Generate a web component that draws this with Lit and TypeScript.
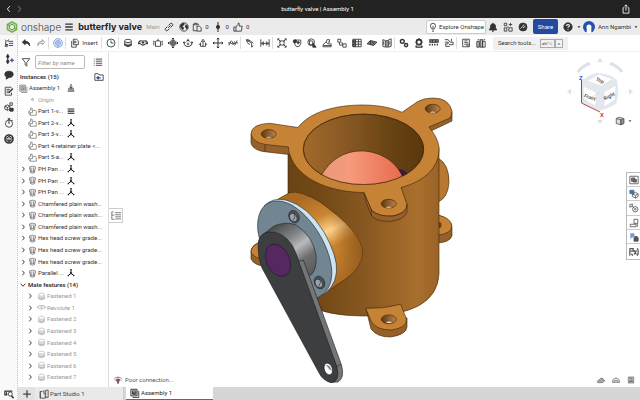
import { LitElement, html, css, svg, nothing } from "lit";
import { customElement, property } from "lit/decorators.js";

const icons: Record<string, unknown> = {
  chevL: svg`<path d="M7 2.5 4 6l3 3.5"/>`,
  chevR: svg`<path stroke-width="1.300" d="M5 2.5 8 6 5 9.5"/>`,
  down: svg`<path stroke-width="1.300" d="M2.500 4 6 8l3.500-4"/>`,
  share: svg`<path d="M4 4.5H2.5V11h7V4.5H8M6 8V1M4 3l2-2 2 2"/>`,
  menu: svg`<path stroke-width="1.6" d="M1.5 2.5h9M1.5 6h9M1.5 9.5h9"/>`,
  link: svg`<path stroke-width="1.2" d="M5 7 8 4M5.500 4l2-2q1.500-1 2.500 0t0 2.500l-2 2M6.500 8l-2 2q-1.500 1-2.500 0t0-2.500l2-2"/>`,
  globe: svg`<circle cx="6" cy="6" r="5"/><path fill="currentColor" stroke="none" d="M2 3 5 1l2 1-1 2-2 1 2 2-1 3-2-2-2-3zM8 3l2 1 1 3-2 2-1-2-1-1z"/>`,
  world: svg`<circle cx="6" cy="6" r="4.800" fill="currentColor"/><path stroke="#ececec" d="M3 8 6 5l1-2M6 7l3-2"/>`,
  doc: svg`<path d="M6 10.500H1.500v-8h1.500M6 2.500h1.500V4M3 1.500h3v2H3zM6 5h3l2 2v4H6z"/>`,
  commit: svg`<path stroke-width="1.300" d="M6 0v12"/><circle cx="6" cy="6" r="2" fill="currentColor"/>`,
  thumb: svg`<path d="M1 6h2.500v5H1zM3.500 6 6 3V1.500q1.500-1 1.500 1V5H11l-1 6H3.500"/>`,
  bulb: svg`<path d="M4.800 8.500Q3 6.500 3 4.500 3 1.500 6 1.500t3 3q0 2-1.800 4zM4.800 11h2.400M6 4.500v3.500"/>`,
  bell: svg`<path fill="currentColor" d="M1.500 9.500 3 7V4.500Q3.500 2 6 2t3 2.500V7l1.500 2.500zM5 10.500h2L6 11.500zM6 1v1"/>`,
  apps: svg`<path d="M1.500 1.500h3v3h-3zM1.500 7h3v4h-3zM7 7h4v4H7zM9 1v4M7 3h4M5 6h2"/>`,
  help: svg`<circle cx="6" cy="6" r="5" fill="currentColor"/><path stroke="#fff" stroke-width="1.300" d="M4.300 4.800q0-1.800 1.700-1.800t1.700 1.500Q7.500 5.500 6 6.300v.7M6 8.300v1"/>`,
  caret: svg`<path fill="currentColor" stroke="none" d="M3 4.500h6L6 8z"/>`,
  features: svg`<path d="M1 2l2 2 3-2M2 4v4h3M5 4h6M6 6.500h5M6 9h5M1 10l3-2"/><circle cx="3" cy="9" r="1.500"/>`,
  undo: svg`<path fill="currentColor" d="M5 2 1.500 5 5 8V6.200q4-.700 5.500 3.300Q10.500 4 5 4z"/>`,
  redo: svg`<path d="M7.500 2 10.500 5l-3 3V6Q3.500 5.500 2 9q0-5 5.500-5z"/>`,
  regen: svg`<circle cx="6" cy="6" r="5.300" fill="#dfe8fa"/><circle cx="6" cy="6" r="3"/><path d="M6 3v6M3.500 6h5M6 11V9"/>`,
  insert: svg`<path d="M2 3.500v7.500h5.500V8M4 1.500h4l2 2V8H4zM6 3v3.500M4.500 5H8"/>`,
  clock: svg`<circle cx="6" cy="6" r="4.800"/><path d="M6 3v3h3"/>`,
  fasten: svg`<path fill="#ddd" d="M2 4v5q4 3 8 0V4"/><path stroke-width="1.500" d="M2 7.500q4 3 8 0"/><ellipse cx="6" cy="3.500" rx="4" ry="2" fill="#fff"/>`,
  revolute: svg`<path stroke-width="1.300" d="M1 6q0-3 3-2.500l4 0q3-.5 3 2.500M3 7q3 3 6 0M0 5l1 2 2-1M12 5l-1 2-2-1"/><circle cx="6" cy="5.500" r="1" fill="currentColor"/>`,
  slider: svg`<path d="M3 4v6h6V4M3 4q3-2 6 0M6 1v3M1 5v4M11 5v4M2 4H0M10 4h2"/>`,
  planar: svg`<path stroke-width="1.200" d="M3.500 3.500h5v5h-5zM6 0v12M0 6h12M4.500 1.500 6 0l1.500 1.500M4.500 10.500 6 12l1.500-1.500M1.500 4.500 0 6l1.500 1.500M10.500 4.500 12 6l-1.500 1.500"/>`,
  cyl: svg`<path stroke-width="1.200" d="M4 4q2-3 4 0M1.500 5v3q4 4.500 9 0V5M6 1v3M0 6l1.500-1.500L3 6M9 6l1.500-1.500L12 6"/><circle cx="6" cy="7" r="1"/>`,
  pin: svg`<path d="M3 5.500v4.500h6V5.500M4 4.500l2-3 2 3zM6 5v5M1 7.500h2M9 7.500h2"/>`,
  move: svg`<path stroke-width="1.200" d="M6 0v12M0 6h12M4.500 1.500 6 0l1.500 1.500M4.500 10.500 6 12l1.500-1.500M1.500 4.500 0 6l1.500 1.500M10.500 4.500 12 6l-1.500 1.500"/>`,
  parallel: svg`<path d="M1 9l3-6M8 9l3-6M0 6q3-1 5 1M12 6q-3-1-5 1M5 4l1 4 2-4"/>`,
  tangent: svg`<path d="M1 2l7 4v5M4 2l6 4M2 5l4 3M8 11l2-2"/><circle cx="3" cy="3" r="1.200"/>`,
  width: svg`<path d="M1 1.500v9M11 1.500v9M4 4v5M8 4v5M1.500 6.500h9M3 5 1.500 6.500 3 8M9 5l1.500 1.500L9 8"/>`,
  expl: svg`<path d="M1 1l3.500 3.500M11 1 7.500 4.500M1 11l3.500-3.500M11 11 7.500 7.500M1 3V1h2M9 1h2v2M1 9v2h2M9 11h2V9"/><rect x="3.500" y="3.500" width="5" height="5"/>`,
  blob: svg`<path d="M4 2.500h6.500v4.500q-1 4-5 3.500L3 7z"/><circle cx="3.500" cy="4" r="2" fill="currentColor"/><circle cx="7.500" cy="5.500" r="1.300" fill="currentColor"/>`,
  section: svg`<circle cx="5" cy="5" r="4"/><path d="M3 3v5h4V4z"/><path d="M7 6l4 5H7z" fill="currentColor"/>`,
  robot: svg`<path d="M1 10.500h10V7H7L5 5 2 7zM5 5l1-3h3v3H7M2 9h9"/>`,
  stack: svg`<path d="M1 1.500h3.500v3.500H1zM3 5v3.500h4V6H5M7 8v3h4V7H8z"/>`,
  pattern: svg`<path fill="#999" d="M1 2.500h3v3H1zM1 7h3v3H1z"/><path d="M1 1.500h10v9H1zM1 4.500h10M1 7.500h10M4.300 1.500v9M7.700 1.500v9"/>`,
  plane: svg`<path fill="#777" d="M0 7 4 3l8 2-4 4zM4 3v5M6 4l3 4"/>`,
  panels: svg`<path d="M1 2l3 1v8l-3-1zM5 3h2v8H5zM8 2l3-1v9L8 11zM2 4v4M9.500 4v4"/>`,
  gears: svg`<circle cx="4" cy="4" r="2.300" stroke-width="1.700"/><circle cx="8.500" cy="8.500" r="1.900" stroke-width="1.700"/>`,
  gear: svg`<circle cx="6" cy="5" r="3" stroke-width="2"/><path stroke-width="1.500" d="M6 0v1.500M1.500 5H2M10 5h.5M2 11h8M3 9l-1 2M9 9l1 2M3 2l1 1M9 2 8 3"/>`,
  rack: svg`<path fill="#999" stroke-width="1.300" d="M1 2h10v3H1zM4 2v3M8 2v3"/><path stroke-width="1.500" d="M1 7v2M4 7v2M7 7v2M10 7v2"/>`,
  flow: svg`<path d="M1 2h4l2 3h4M11 5v3H6M1 5h4v2H2v3h5M9 1v3"/>`,
  bom: svg`<path d="M2 1.500h8v9H2zM4 3.500h4M4 5.500h4M4 7.500h3"/><circle cx="8.500" cy="8.500" r="1.500" fill="#fff"/>`,
  buildings: svg`<path fill="#bbb" d="M1 4h3v7H1zM5 2h3v9H5z"/><path d="M8 4h3v7H8zM2 2h2M9 2h2"/>`,
  addNode: svg`<path stroke-width="1.400" d="M4.500 0v12"/><circle cx="4.500" cy="3" r="1.500" fill="currentColor"/><circle cx="4.500" cy="9" r="1.500" fill="currentColor"/><path stroke="#26408f" stroke-width="1.300" d="M9.500 5v5M7 7.500h5"/>`,
  chat: svg`<path fill="currentColor" d="M6 1.500q5 0 5 3.700T6 9l-3.500 2 .5-2.500Q1 7.500 1 5.200 1 1.500 6 1.500z"/>`,
  note: svg`<path d="M9 8v3H1.500V1.500H9M3 4h4M3 6h3M3 8h2"/><path stroke-width="1.700" d="M5.500 8.500 10.500 3"/>`,
  cubes: svg`<path d="M1 5l3-1.500L7 5v3.500L4 10 1 8.500zM1 5l3 1.500L7 5M4 6.500V10M7 1h3v3H7z"/><path fill="currentColor" d="M7 7.500h4V11H7z"/>`,
  timer: svg`<circle cx="6" cy="6.800" r="4.300"/><path stroke-width="1.400" d="M6 4v3M4.500 1h3M6 1v2M10 2.500 9 3.500"/>`,
  chip: svg`<circle cx="6" cy="6" r="4.800" stroke-width="2"/><path stroke-width="1.300" d="M6 3 8.500 4.500v3L6 9 3.500 7.500v-3zM6 5.500V9"/>`,
  track: svg`<path stroke-width="1.400" d="M1 2.500h9M1 2v5h3M3 4v3"/><circle cx="7.500" cy="6" r="2.500" fill="#fff"/><path stroke-width="1.800" d="M9 8l2.500 3"/>`,
  funnel: svg`<path d="M1.500 2h9L7 6.500V11L5 9.500v-3z"/>`,
  list: svg`<path d="M3.500 2.500H11M3.500 5H11M3.500 7.500H11M3.500 10H11M1 2.500h1M1 5h1M1 7.500h1M1 10h1"/>`,
  folder: svg`<path d="M1 2.500V10h10V3.500H6L5 2H1"/><path stroke="#26408f" stroke-width="1.300" d="M5.500 5.200 3.500 7l2 1.800M4 7h4"/>`,
  asm: svg`<path fill="#ddd" d="M1 1.500h7.500v8H1zM3 3.500v4h4v-4z"/><path d="M10.500 3.500v8H3M4 5h2v2H4z"/>`,
  part: svg`<path d="M3.500 1.500h2v3H10l1 1.500v5H3L1 8.500V6l2.500-1.500zM1 6l2 1.500V11M3 7.500h3V5"/>`,
  screw: svg`<path fill="#e4e4e4" d="M2 2.500q4-2 8 0v3L9 6v4q-3 2-6 0V6L2 5.500zM4 3.500v6M7.500 3.500v6M3 8q3 1.500 6 0"/>`,
  dot: svg`<circle cx="6" cy="6" r="1.200"/>`,
  ground: svg`<path stroke-width="1.300" d="M6 0v6M3.500 4 6 6.500 8.500 4"/><path stroke-width="1.800" d="M1.500 7.500h9M1 10.500h10"/>`,
  fixed: svg`<path stroke-width="1.800" d="M1 3h10M1 6.200h10M1 9.400h10"/>`,
  mate: svg`<path stroke-width="1.500" d="M6 1v5.500L1.500 10M6 6.500 10.500 10"/><circle cx="6" cy="6" r="1.300" fill="currentColor"/><path stroke-width="2" d="M1 10h2M9 10h2M6 0v2"/>`,
  tree: svg`<path d="M1 1v9h3M1 1h2M1 5h3M5 2h7M5 4.500h7M5 7h7M5 9.500h7"/>`,
  wifi: svg`<path stroke="#888" d="M1 4.500q5-4 10 0M2 6.500q4-3 8 0"/><path fill="#8a4a4a" stroke="#8a4a4a" d="M4 5.500h4L6 10.500zM4.500 3.500h3"/>`,
  plus: svg`<path stroke-width="1.500" d="M6 1.500v9M1.500 6h9"/>`,
  studio: svg`<path d="M4 3H1.500v8h6V8M1.500 3v8M5 2.500h1M8 1.500h3v8.500H8zM6 2v4h2"/>`,
  weight: svg`<path fill="#aaa" d="M1 7q5-1 6-3l4 2v2l-3 2H1z"/><path d="M3 6q1-3 5-3l1 2"/>`,
  gauge: svg`<path fill="#ddd" d="M0.500 9.500Q1 3 6 3t5.500 6.500z"/><path d="M3 9.500q0-3 3-3t3 3"/>`,
  props: svg`<path fill="#bbb" d="M2 1.500h8V8H2zM1.500 10.500h9L9 8H3z"/><path d="M4 3.500h4M5 6h3"/>`,
  tAsm: svg`<path d="M1 1.500h10v9H1z"/><path fill="#777" d="M3 3.500h4v4H3zM5 5.500h4v3H5z"/>`,
  tCube: svg`<path fill="#4c72ad" stroke="#4c72ad" d="M1 1.500h5v4H1z"/><path d="M4 6l4-2 3 2v3l-3 2-4-2zM4 6l4 1.500L11 6M8 7.500V11"/>`,
  tGear: svg`<path d="M1 2l3-1v3L1 5zM4 4l2 2"/><circle cx="7.500" cy="7.500" r="3.200"/><circle cx="7.500" cy="7.500" r="1"/>`,
  tDev: svg`<path d="M6 1.500h4.500v5H6zM1.500 7.500h7v3h-7zM10 7v3.500"/>`,
  tLock: svg`<path fill="#7c98d0" stroke="#7c98d0" d="M2 2h4v4H2zM1 8l3-2"/><path fill="currentColor" d="M6 7h5v4H6zM7 7V5.500h3V7"/>`,
  tVar: svg`<path stroke-width="1.500" d="M1 1.500v9M1.500 2H5v3H2M3 8l1.500 2.500M6 4l3 5M9 4 6 9M10 1.500q2 4 0 9"/>`,
  iso: svg`<path fill="#ddd" d="M1.500 3 5 1.500 10.500 3v6L7 10.500 1.500 9z"/><path fill="#999" d="M7 4.500 10.500 3v6L7 10.500z"/><path d="M1.500 3 7 4.500v6"/>`,
};

@customElement("ui-icon")
export class UiIcon extends LitElement {
  @property() name = "";
  static styles = css`
    :host { display: inline-flex; flex: none; width: 10px; height: 10px; }
    svg { width: 100%; height: 100%; fill: none; stroke: currentColor; stroke-width: 1; }
  `;
  render() {
    return html`<svg viewBox="0 0 12 12" aria-hidden="true">${icons[this.name]}</svg>`;
  }
}

@customElement("valve-model")
export class ValveModel extends LitElement {
  static styles = css`
    :host { display: block; }
    svg { display: block; width: 100%; height: 100%; }
    .edge { stroke: #3b2508; stroke-width: 0.6; stroke-linejoin: round; }
    .top { fill: #c68336; }
    .side { fill: #95602a; }
    .steel { stroke: #1d1f22; stroke-width: 0.6; stroke-linejoin: round; }
  `;
  render() {
    return html`<svg viewBox="240 90 220 300" role="img" aria-label="Butterfly valve assembly">
      <defs>
        <linearGradient id="body"><stop offset="0" stop-color="#6c4413"/><stop offset=".2" stop-color="#714816"/><stop offset=".55" stop-color="#8b5a22"/><stop offset=".85" stop-color="#a96f2d"/><stop offset="1" stop-color="#9a6326"/></linearGradient>
        <linearGradient id="bore"><stop offset="0" stop-color="#a26a2c"/><stop offset=".4" stop-color="#855622"/><stop offset=".75" stop-color="#664112"/><stop offset="1" stop-color="#5b390d"/></linearGradient>
        <linearGradient id="boss" gradientUnits="userSpaceOnUse" x1="296" y1="200" x2="338" y2="290"><stop offset="0" stop-color="#a96b22"/><stop offset=".25" stop-color="#c98531"/><stop offset=".42" stop-color="#ffd18a"/><stop offset=".58" stop-color="#c9832e"/><stop offset="1" stop-color="#a36620"/></linearGradient>
        <linearGradient id="bossShade" gradientUnits="userSpaceOnUse" x1="325" y1="250" x2="362" y2="240"><stop offset=".3" stop-color="#8a5519" stop-opacity="0"/><stop offset="1" stop-color="#8a5519" stop-opacity=".85"/></linearGradient>
        <linearGradient id="disc"><stop offset="0" stop-color="#e89a7b"/><stop offset=".35" stop-color="#f69a7c"/><stop offset="1" stop-color="#e8694d"/></linearGradient>
        <linearGradient id="hub" gradientUnits="userSpaceOnUse" x1="277" y1="226" x2="312" y2="275"><stop offset="0" stop-color="#4e4f51"/><stop offset=".3" stop-color="#87888a"/><stop offset=".48" stop-color="#b9babb"/><stop offset=".7" stop-color="#6e6f71"/><stop offset="1" stop-color="#57585a"/></linearGradient>
        <linearGradient id="holeShade"><stop offset="0" stop-color="#5d3a10"/><stop offset="1" stop-color="#b98450"/></linearGradient>
        <clipPath id="mouth"><ellipse cx="363.500" cy="149.300" rx="60.200" ry="35.200"/></clipPath>
      </defs>
      <path class="edge" fill="#b87830" d="M438 158Q449 164 449 182 448 198 438 202z"/>
      <path class="edge side" d="M438 215Q452 219 452 228V236Q450 242 438 243z"/>
      <path class="edge top" d="M438 215Q451 218 452 226 451 234 438 235z"/>
      <ellipse cx="439.500" cy="225" rx="2" ry="3" fill="#6b3c10"/>
      <path class="edge side" d="M258 243Q251 246 251 252V259Q254 266 270 267V243z"/>
      <path class="edge top" d="M258 243Q251 247 251 252 254 259 266 259V243z"/>
      <path class="edge" fill="url(#body)" d="M288 148V272Q290 316 363.500 316T439 274V148z"/>
      <path class="edge side" d="M251 134V143Q253 151 267 152L289 154.500 300 140 270 130zM452 112V121L431 131 425 122z"/>
      <path class="edge top" d="M298 127.500 270 123.300Q251 124 251 134 253 143 266 144.500L288.500 147Q288 151 290 155C297 177 326 192 363.500 192.500L371.500 210Q378 217 393 216 407 213 407 204.500L401 187.500C426 181 440 166 439 147Q438 138 429 127L450 118Q452 115 452 111 449 98 433 98 423 98 417 102L402 112.300C388 106 373 105 361 105 330 105.500 308 114 298 127.500z"/>
      <path class="edge side" d="M364 192.500 371.500 210Q378 217 393 216 407 213 407 204.500V212Q404 220 390 221.500 374 221 371 215L366 202z"/>
      <path d="M265 144.500v7.500M371.500 210v6" class="edge"/>
      <ellipse class="edge" fill="url(#bore)" cx="363.500" cy="149.300" rx="60.200" ry="35.200"/>
      <g clip-path="url(#mouth)">
        <path fill="#3a1a48" d="M397 169Q405 168 409 176L402 181z"/>
        <path class="edge" fill="url(#disc)" d="M321 176C330 160 344 151 361 151S396 160 403 178L390 190H330z"/>
      </g>
      <ellipse class="edge" fill="none" cx="363.500" cy="149.300" rx="60.200" ry="35.200"/>
      ${[[268.7, 134], [432.7, 108.7], [388.700, 203.700]].map(([x, y]) => svg`
        <ellipse class="edge" fill="url(#holeShade)" cx=${x} cy=${y} rx="7.500" ry="4.400"/>
        <path fill="#d0a878" d=${`M${x - 3} ${y + 4}q3-3 6 0-3 1-6 0z`}/>`)}
      <path class="edge side" d="M366 309 371 329Q377 337 390 337 406 335 407 327V318z"/>
      <path class="edge top" d="M365.700 308.300Q384 309 400.700 304.300L406.500 319Q407 328 391 330 377 330 371.500 322z"/>
      <ellipse class="edge" fill="url(#holeShade)" cx="388.700" cy="319.300" rx="7.500" ry="4.400"/>
      <path fill="#f3e6d6" d="M386 322.500q3-2 6 0-3 1-6 0z"/>
      <path class="edge" fill="url(#boss)" d="M278 199 290 192.500Q300 190 320 202 341 217 352 230 363 243 362.500 254 361 268 346 279L317 298z"/>
      <path fill="url(#bossShade)" d="M320 202Q341 217 352 230 363 243 362.500 254 361 268 346 279L328 290Z"/>
      <path class="steel" fill="#cfe4f1" d="M264 206Q273 197 286 200 308 206 324 232 338 257 336.500 272 335 290 317 298L300 290z"/>
      <path class="steel" fill="#718592" d="M258 232C256 215 262 202 276 201 296 200 318 226 327 250 336 274 332 291 317 298L300 290 262 250z"/>
      <path class="steel" fill="url(#hub)" d="M261 236 274 226Q286 221 296 225 313 236 316 255 317 268 312 274L303 280 280 262z"/>
      <path class="steel" fill="#737577" d="M296 262 303.300 260 341.500 365Q345 378 338 382L330 382.500z"/>
      <path d="M336 367 341 364.500" class="steel"/>
      <path class="steel" fill="#3d3e3f" d="M258 246Q258 234 268 232 283 231 292 245 296 252 299 262L337 367Q340 381 332 382.500 323 382 318 371L262 268Q258 258 258 246z"/>
      <ellipse fill="#55285f" stroke="#271330" stroke-width=".6" cx="278" cy="260.300" rx="11.500" ry="17" transform="rotate(-25 278 260.300)"/>
      <ellipse class="steel" fill="#fff" cx="328.300" cy="369" rx="4" ry="6" transform="rotate(-20 328.300 369)"/>
      <path fill="#888" d="M326 365q4-1 6 6l-3-2z"/>
      ${[[294, 216.7], [319.500, 282.500]].map(([x, y]) => svg`
        <ellipse class="steel" fill="#4e555b" cx=${x} cy=${y} rx="5" ry="6.500" transform=${`rotate(-25 ${x} ${y})`}/>
        <ellipse class="steel" fill="#9aa2a8" cx=${x - 1} cy=${y + 0.5} rx="3.500" ry="4.500" transform=${`rotate(-25 ${x} ${y})`}/>
        <path fill="none" class="steel" d=${`M${x} ${y - 4}l1 4-2 4`}/>`)}
    </svg>`;
  }
}

interface Row { label: string; icon: string; kind?: "root" | "origin" | "group" | "mate"; open?: boolean; badge?: string; }

const screws = (label: string, count: number, badge?: string): Row[] =>
  Array.from({ length: count }, () => ({ label, icon: "screw", open: true, badge }));

const rows: Row[] = [
  { label: "Assembly 1", icon: "asm", kind: "root", badge: "ground" },
  { label: "Origin", icon: "dot", kind: "origin" },
  { label: "Part 1-v...", icon: "part", badge: "fixed" },
  { label: "Part 2-v...", icon: "part", badge: "mate" },
  { label: "Part 3-v...", icon: "part", badge: "mate" },
  { label: "Part 4-retainer plate <...", icon: "part" },
  { label: "Part 5-a...", icon: "part", badge: "mate" },
  ...screws("PH Pan ...", 3, "mate"),
  ...screws("Chamfered plain wash...", 3),
  ...screws("Hex head screw grade...", 3),
  ...screws("Parallel ...", 1, "mate"),
  { label: "Mate features (14)", icon: "", kind: "group" },
  { label: "Fastened 1", icon: "fasten", kind: "mate", open: true },
  { label: "Revolute 1", icon: "revolute", kind: "mate", open: true },
  ...[2, 3, 4, 5, 6, 7].map((n): Row => ({ label: `Fastened ${n}`, icon: "fasten", kind: "mate", open: true })),
];

const toolGroups = [
  ["fasten", "revolute", "slider", "planar", "cyl", "pin", "move", "parallel"],
  ["tangent", "width"],
  ["expl", "blob", "section", "robot", "stack", "pattern", "plane", "panels"],
  ["gears", "gear", "rack", "flow"],
  ["bom", "buildings"],
];

@customElement("app-root")
export class AppRoot extends LitElement {
  static styles = css`
    :host {
      display: grid; grid-template-rows: 18px 17px minmax(0, 1fr); height: 100vh; overflow: hidden;
      background: #fff; color: #333; font: 6px/8px Roboto, "Noto Sans", sans-serif;
    }
    * { box-sizing: border-box; }
    button, input { font: inherit; color: inherit; border: 0; padding: 0; margin: 0; background: none; }
    button { display: inline-flex; align-items: center; justify-content: center; flex: none; white-space: nowrap; }
    input { min-width: 0; outline: none; }
    input::placeholder { color: inherit; opacity: 1; }
    .window { display: grid; grid-template-columns: 1fr auto 1fr; align-items: center; padding: 0 9px 0 4px; background: #222; color: #fff; }
    .window .nav { display: flex; }
    .window .off { color: #666; }
    .window .end { justify-self: end; }
    .header { display: flex; align-items: center; background: #ebebeb; padding: 0 1px 0 6px; white-space: nowrap; }
    .logo { width: 12px; height: 12px; flex: none; }
    .brand { font: 300 10px/16px Inter, sans-serif; color: #444; margin: 0 3px; }
    h1 { font: 700 9px/16px Inter, sans-serif; color: #222; margin: 0 4px; }
    .branch { color: #999; width: 14px; margin-right: 2px; }
    .header .act { height: 14px; min-width: 14px; gap: 3px; margin-right: 1px; }
    .header .stat { margin-right: 4px; }
    .push { flex: 1; }
    .explore { width: 60px; height: 14px; gap: 1px; border: 1px solid #ccc; border-radius: 2px; background: #fff; }
    .shareBtn { height: 15px; width: 25px; border-radius: 2px; background: #234a9f; color: #fff; margin: 0 5px 0 2px; }
    .header .user { gap: 2px; margin: 0; }
    .small { width: 6px; height: 6px; }
    .avatar { width: 12px; height: 12px; margin-right: 1px; }
    .main { display: grid; grid-template-columns: 18px 91px minmax(0, 1fr); grid-template-rows: 17px minmax(0, 1fr) 13px; min-height: 0; }
    .rail { grid-row: 1 / -1; display: flex; flex-direction: column; background: #f9f9f9; border-right: 1px dotted #c4c4c4; }
    .rail button { height: 16px; }
    .rail button:last-child { margin-top: auto; height: 13px; }
    .toolbar { grid-column: 2 / -1; display: flex; align-items: center; border-bottom: 1px solid #f0f0f0; }
    .toolbar button { width: 15px; height: 15px; }
    .toolbar .faded { color: #888; }
    .toolbar .blue { color: #7e9cd8; }
    .toolbar .wide { width: 34px; gap: 2px; }
    .sep { flex: none; width: 1px; height: 12px; background: #ddd; margin-right: 1px; }
    .search { display: flex; align-items: center; height: 13px; padding: 0 5px; background: #f1f1f1; margin-left: 5px; }
    .search input { width: 42px; }
    kbd { font: 4px/7px Roboto, "DejaVu Sans", sans-serif; border: 1px solid #aaa; padding: 0 1px; white-space: nowrap; }
    kbd + kbd { padding: 0 2px; }
    .panel { display: flex; flex-direction: column; min-height: 0; overflow: hidden; border-right: 1px solid #ddd; }
    .filter { display: flex; flex: none; align-items: center; justify-content: space-between; gap: 4px; height: 19px; padding: 1px 5px 0 3px; }
    .filter input { flex: 1; height: 14px; padding: 0 2px; border: 1px solid #bbb; border-radius: 2px; font-style: italic; color: #888; }
    .filter ui-icon:last-child { margin-left: 4px; }
    h2 { display: flex; flex: none; align-items: center; justify-content: space-between; height: 11px; font-size: 6px; font-weight: 600; margin: 0; padding: 0 4px 0 2px; }
    .tree { display: grid; flex: none; grid-auto-rows: 12px 11px 12px 11px 12px 11px 12px; list-style: none; margin: 0; padding: 0; }
    .row { display: flex; align-items: center; white-space: nowrap; }
    .row .twist { width: 8px; height: 8px; color: #222; }
    .row .toggle, .gutter { flex: none; width: 10px; }
    .row .kind { width: 9px; height: 9px; color: #777; }
    .row .name { width: 29px; margin-left: 1px; }
    .row.root .kind { margin-left: 1px; }
    .row.root .name { width: 38px; }
    .row.origin, .row.mate { color: #999; }
    .row.group { font-weight: 600; }
    .row.group .name { margin-left: 0; }
    .row.mate { margin-left: 4px; border-left: 1px solid #eee; padding-left: 2px; }
    .row.mate .kind { color: #bbb; margin-left: 2px; }
    .badge { width: 8px; height: 8px; color: #222; }
    .stage { position: relative; display: flex; align-items: flex-start; justify-content: center; min-height: 0; overflow: hidden; }
    valve-model { width: 220px; height: 300px; margin-top: 38px; margin-right: 49px; flex: none; }
    .handle { position: absolute; left: 0; top: 156px; width: 14px; height: 15px; border: 1px solid #ccc; border-left: 0; background: #fff; color: #666; }
    .cube { position: absolute; right: 5px; top: 4px; width: 70px; height: 75px; }
    .view { position: absolute; right: 7px; top: 64px; gap: 2px; color: #555; }
    .tables { position: absolute; right: 0; top: 120px; display: flex; flex-direction: column; width: 14px; border: 1px solid #bbb; border-right: 0; background: #fff; color: #555; }
    .tables button { height: 14px; border-bottom: 1px solid #ccc; }
    .tables button:nth-child(3n) { height: 15px; }
    .tables button:last-child { border-bottom: 0; }
    .status { position: absolute; left: 4px; bottom: 2px; display: flex; align-items: center; gap: 2px; color: #555; }
    .measure { position: absolute; right: 5px; bottom: 3px; display: flex; gap: 7px; color: #666; }
    .measure ui-icon { width: 8px; height: 8px; }
    .tabs { grid-column: 2 / -1; display: flex; background: #d6d6d6; color: #444; }
    .tabs .add { width: 17px; background: #e2e2e2; }
    .tabs .tab { width: 89px; justify-content: flex-start; gap: 1px; padding-left: 4px; background: #e9e9e9; border-right: 1px solid #ccc; }
    .tabs .on { width: 87px; margin-left: 2px; background: #fff; color: #222; border-right: 0; border-bottom: 1px solid #4668b5; }
    .cubeText { font: 600 5px Roboto, sans-serif; fill: #555; }
    .axis { font: 600 6px Roboto, sans-serif; }
  `;

  private act(name: string, label: string, cls = "act", body: unknown = nothing) {
    return html`<button class=${cls} aria-label=${label}><ui-icon name=${name}></ui-icon>${body}</button>`;
  }

  private row(r: Row) {
    const twist = (name: string) => html`<button class="toggle" aria-label="Toggle ${r.label}"><ui-icon class="twist" name=${name}></ui-icon></button>`;
    if (r.kind === "group") {
      return html`<li class="row group">${twist("down")}<span class="name">${r.label}</span></li>`;
    }
    return html`<li class="row ${r.kind ?? ""}">
      ${r.kind === "root" ? nothing : r.open ? twist("chevR") : html`<span class="gutter"></span>`}
      <ui-icon class="kind" name=${r.icon}></ui-icon><span class="name">${r.label}</span>
      ${r.badge ? html`<ui-icon class="badge" name=${r.badge}></ui-icon>` : nothing}
    </li>`;
  }

  render() {
    return html`
      <div class="window">
        <div class="nav">${this.act("chevL", "Back")}${this.act("chevR", "Forward", "off")}</div>
        <span>butterfly valve | Assembly 1</span>
        ${this.act("share", "Share window", "end")}
      </div>
      <header class="header">
        <svg class="logo" viewBox="0 0 12 12" aria-hidden="true" fill="none">
          <path stroke="#74b743" stroke-width="1.700" d="M6 1 10.500 3.500v5L6 11 1.500 8.500v-5z"/>
          <path stroke="#4f9040" stroke-width=".9" d="M6 3.200 8.500 4.600v2.800L6 8.800 3.500 7.400V4.600zM1.500 3.500l2 1.200M8.500 7.400l2 1.100"/>
        </svg>
        <span class="brand">onshape</span>
        ${this.act("menu", "Menu", "menu")}
        <h1>butterfly valve</h1><span class="branch">Main</span>
        ${this.act("link", "Link")}${this.act("globe", "Public")}
        ${this.act("doc", "Copies", "act stat", "0")}
        ${this.act("commit", "Versions", "act stat", "0")}
        ${this.act("thumb", "Likes", "act stat", "0")}
        <span class="push"></span>
        ${this.act("bulb", "Explore Onshape", "explore", "Explore Onshape")}
        ${this.act("bell", "Notifications")}${this.act("apps", "Apps")}${this.act("world", "Network")}
        <button class="shareBtn">Share</button>
        ${this.act("help", "Help", "act", html`<ui-icon class="small" name="caret"></ui-icon>`)}
        <button class="act user">
          <svg class="avatar" viewBox="0 0 12 12" aria-hidden="true"><circle cx="6" cy="6" r="6" fill="#2650ae"/><path fill="#fff" d="M6 3.500q2.500 0 2.500 2.500Q8 8.500 8.500 12h-5Q4 8.500 3.500 6 3.500 3.500 6 3.500z"/></svg>
          Ann Ngambi<ui-icon class="small" name="caret"></ui-icon>
        </button>
      </header>
      <main class="main">
        <nav class="rail" aria-label="Panels">
          ${["features", "addNode", "chat", "note", "cubes", "timer", "chip", "track"].map((n) => this.act(n, n, ""))}
        </nav>
        <div class="toolbar" role="toolbar">
          ${this.act("undo", "Undo", "")}${this.act("redo", "Redo", "faded")}<span class="sep"></span>
          ${this.act("regen", "Update", "blue")}<span class="sep"></span>
          ${this.act("insert", "Insert", "wide", "Insert")}<span class="sep"></span>
          ${this.act("clock", "Recent", "")}
          ${toolGroups.map((g) => html`<span class="sep"></span>${g.map((n) => this.act(n, n, ""))}`)}
          <label class="search"><input aria-label="Search tools" placeholder="Search tools..." /><kbd>alt/⌥</kbd><kbd>c</kbd></label>
        </div>
        <aside class="panel">
          <div class="filter"><ui-icon name="funnel"></ui-icon><input aria-label="Filter by name" placeholder="Filter by name" /><ui-icon name="list"></ui-icon></div>
          <h2>Instances (15)<ui-icon name="folder"></ui-icon></h2>
          <ul class="tree">${rows.map((r) => this.row(r))}</ul>
        </aside>
        <section class="stage">
          <valve-model></valve-model>
          ${this.act("tree", "Show list", "handle")}
          <svg class="cube" viewBox="565 56 70 75" role="img" aria-label="View cube">
            <g fill="#dde2ea"><path d="M600 58l3 4h-6zM567 91.500l4-3v6zM633 91.500l-4-3v6zM600 124l3-4h-6z"/></g>
            <g fill="none" stroke="#dde2ea" stroke-width="3"><path d="M578 72Q582 66 590 63.500M610 63.500Q618 66 622 72"/></g>
            <path fill="#e3e7ee" d="M597 73Q611 74 617 80 620 95 616 104 608 109 600 111 589 109 582 103 579 90 582 81 588 75 597 73z"/>
            <g fill="#fff" stroke="#d5dae2" stroke-width=".5"><path d="M599 74 613 79 601 86 587 81zM583 86l13 6v14l-12-6zM604 92l12-7-1 15-11 7z"/></g>
            <path d="M581.500 80v23" stroke="#4a55c0"/><path d="M581.500 103 600 112" stroke="#c04a4a"/>
            <path d="M581.500 103 600 92" stroke="#bcd6bc" stroke-width=".5"/>
            <g class="cubeText" text-anchor="middle"><text x="600" y="82" transform="rotate(24 600 80)">Top</text><text x="590" y="99" transform="rotate(20 590 97)">Front</text><text x="609" y="98" transform="rotate(-28 609 96)">Right</text></g>
            <text class="axis" x="579" y="80" fill="#3440b0">Z</text><text class="axis" x="600" y="117" fill="#c03030">X</text>
          </svg>
          ${this.act("iso", "View options", "view", html`<ui-icon class="small" name="caret"></ui-icon>`)}
          <div class="tables">${["tAsm", "tCube", "tGear", "tDev", "tLock", "tVar"].map((n) => this.act(n, n, ""))}</div>
          <div class="status"><ui-icon name="wifi"></ui-icon>Poor connection...</div>
          <div class="measure"><ui-icon name="weight"></ui-icon><ui-icon name="gauge"></ui-icon><ui-icon name="props"></ui-icon></div>
        </section>
        <div class="tabs">
          ${this.act("plus", "Add tab", "add")}
          ${this.act("studio", "Part Studio 1", "tab", "Part Studio 1")}
          ${this.act("asm", "Assembly 1", "tab on", "Assembly 1")}
        </div>
      </main>
    `;
  }
}
